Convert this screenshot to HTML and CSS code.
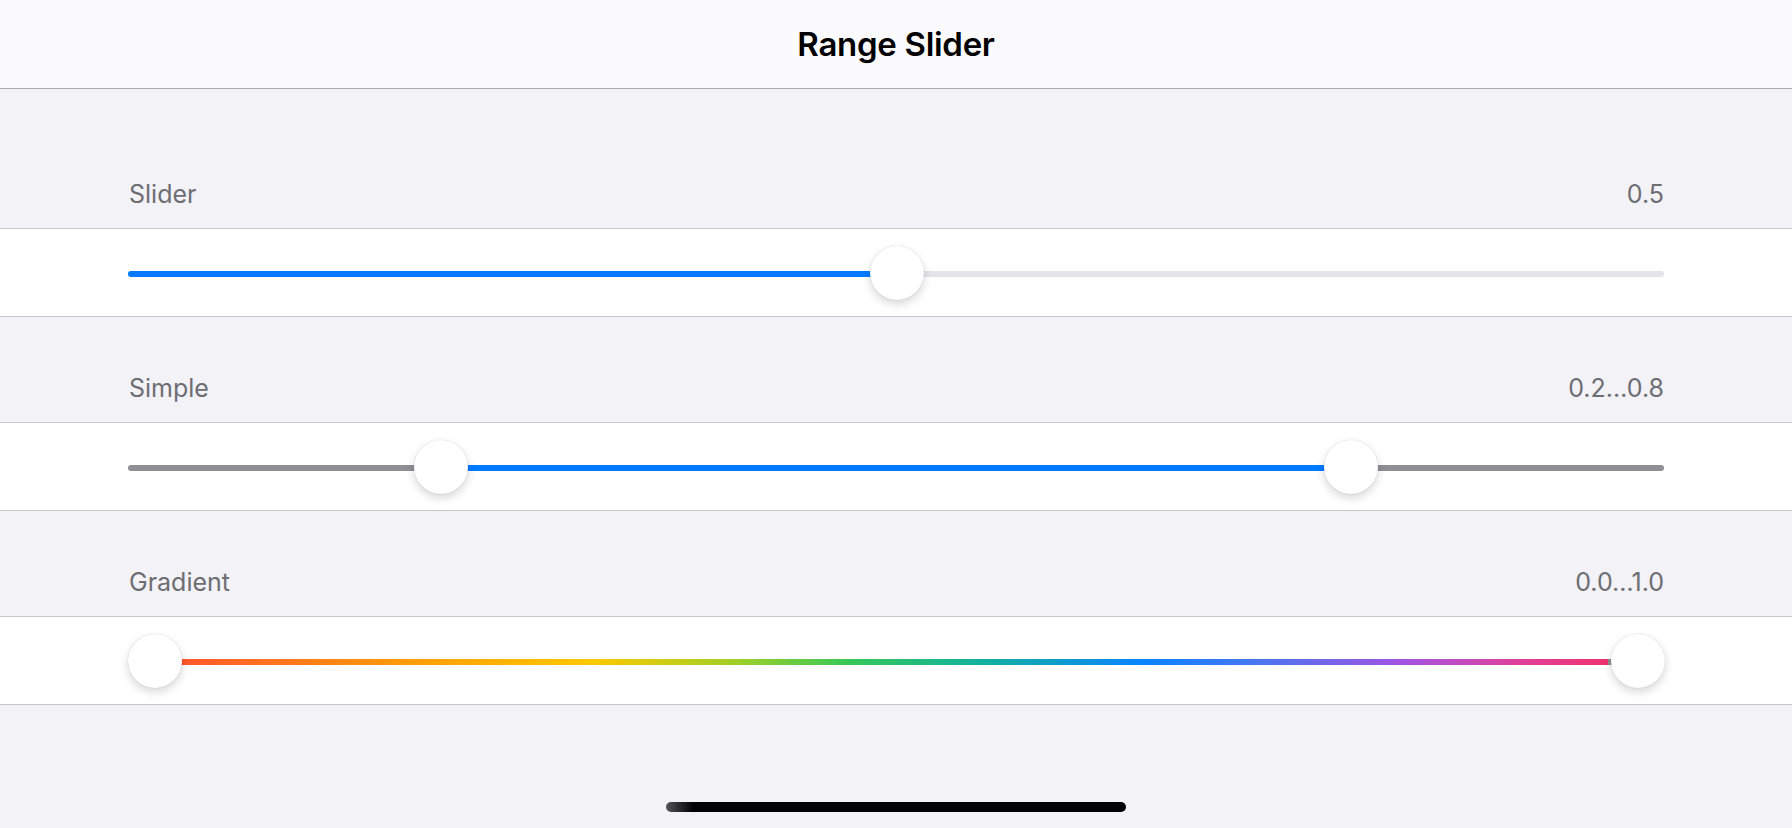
FILE: index.html
```html
<!DOCTYPE html>
<html>
<head>
<meta charset="utf-8">
<title>Range Slider</title>
<link rel="stylesheet" href="styles.css">
</head>
<body>
<div class="screen">
  <header class="navbar"><h1 class="nav-title">Range Slider</h1></header>

  <section class="section first">
    <div class="section-header"><span>Slider</span><span>0.5</span></div>
    <div class="row">
      <div class="slider">
        <div class="track track-light"></div>
        <div class="fill fill-blue" style="left:0; width:768px"></div>
        <div class="thumb" style="left:769px"></div>
      </div>
    </div>
  </section>

  <section class="section">
    <div class="section-header"><span>Simple</span><span>0.2…0.8</span></div>
    <div class="row">
      <div class="slider">
        <div class="track track-dark"></div>
        <div class="fill fill-blue" style="left:312.8px; width:910.4px"></div>
        <div class="thumb" style="left:312.8px"></div>
        <div class="thumb" style="left:1223.2px"></div>
      </div>
    </div>
  </section>

  <section class="section">
    <div class="section-header"><span>Gradient</span><span>0.0…1.0</span></div>
    <div class="row">
      <div class="slider">
        <div class="track track-dark track-inset"></div>
        <div class="fill fill-gradient" style="left:28px; width:1452px"></div>
        <div class="thumb" style="left:27px"></div>
        <div class="thumb" style="left:1510px"></div>
      </div>
    </div>
  </section>

  <div class="home-indicator"></div>
</div>
</body>
</html>
```
FILE: styles.css
```css
html, body {
  margin: 0;
  padding: 0;
}
body {
  background: #f2f2f7;
  font-family: Inter, "Noto Sans", "Liberation Sans", sans-serif;
  width: 1792px;
  height: 828px;
  overflow: hidden;
}
.screen {
  position: relative;
  width: 1792px;
  height: 828px;
}
.navbar {
  height: 88px;
  background: #fbfbfd;
  border-bottom: 1px solid #acacb0;
  display: flex;
  align-items: center;
  justify-content: center;
}
.nav-title {
  margin: 0;
  font-size: 33px;
  font-weight: 600;
  color: #000;
  letter-spacing: -0.3px;
}
.section-header {
  height: 105px;
  box-sizing: border-box;
  padding: 0 128px 18px 129px;
  display: flex;
  justify-content: space-between;
  align-items: flex-end;
  font-size: 25px;
  line-height: 32px;
  color: #6d6d72;
}
.section.first .section-header {
  height: 139px;
}
.row {
  height: 86px;
  background: #fff;
  border-top: 1px solid #c8c7cc;
  border-bottom: 1px solid #c8c7cc;
  display: flex;
  align-items: center;
  padding: 1px 128px 0 128px;
}
.slider {
  position: relative;
  width: 1536px;
  height: 56px;
}
.track {
  position: absolute;
  left: 0;
  right: 0;
  top: 26px;
  height: 6px;
  border-radius: 3px;
}
.track-inset {
  left: 28px;
  right: 28px;
}
.track-light { background: #e4e4e8; }
.track-dark { background: #8e8e93; }
.fill {
  position: absolute;
  top: 26px;
  height: 6px;
}
.fill-blue {
  background: #007aff;
  border-radius: 3px 0 0 3px;
}
.fill-gradient {
  background: linear-gradient(90deg, #ff5030 0%, #ff9a0a 17%, #ffc800 30%, #9fcf28 40%, #34c759 48%, #14b0a0 57%, #0a84ff 68%, #4a76f0 76%, #a452e0 86%, #e0409a 94%, #ee3370 100%);
}
.thumb {
  position: absolute;
  top: 1px;
  width: 54px;
  height: 54px;
  margin-left: -27px;
  border-radius: 50%;
  background: #fff;
  box-shadow: 0 4px 10px rgba(0, 0, 0, 0.16), 0 0 1px rgba(0, 0, 0, 0.2);
}
.home-indicator {
  position: absolute;
  left: 666px;
  bottom: 16px;
  width: 460px;
  height: 10px;
  border-radius: 5px;
  background: linear-gradient(90deg, #555 0%, #000 6%, #000 100%);
}
```
